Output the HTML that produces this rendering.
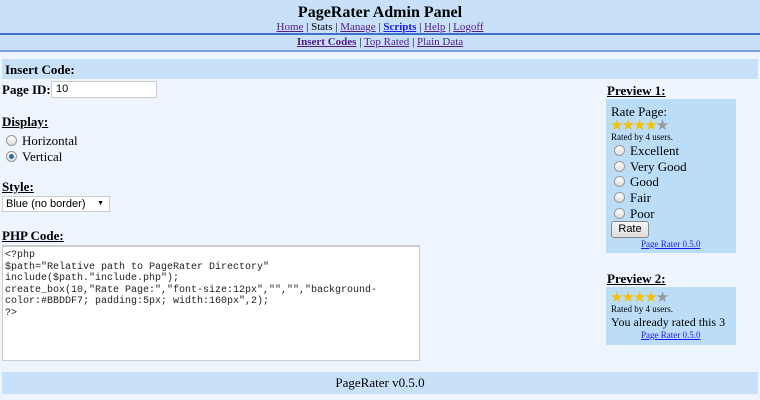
<!DOCTYPE html>
<html><head><style>
body{margin:0;width:760px;height:400px;background:#eef5fe;font-family:"Liberation Serif",serif;color:#000;position:relative;overflow:hidden}
.a{position:absolute}
a{color:#551a8b}
.hdr{left:0;top:0;width:760px;height:33px;background:#c8e1f9;border-bottom:2px solid #3f6fd0;text-align:center}
.sub{left:0;top:35px;width:760px;height:15px;background:#c8e1f9;border-bottom:2px solid #7a9fe8;text-align:center;font-size:11px;line-height:15px}
.bar{background:#c8e1f9}
b.u{text-decoration:underline;font-size:13px}
.radio{display:inline-block;width:9px;height:9px;border:1px solid #999;border-radius:50%;background:linear-gradient(#fff,#ddd);vertical-align:-1px;margin-right:5px}
.radio.on::after{content:"";display:block;width:5px;height:5px;margin:2px;border-radius:50%;background:#2a6cb0}
.box{background:#bbddf7}
.st{color:#f5c000;font-size:15px;letter-spacing:-2px;line-height:14px}
.st i{color:#999;font-style:normal}
pre{margin:0;font-family:"Liberation Mono",monospace;font-size:10px;line-height:11.5px;color:#222}
</style></head><body>
<div class="a hdr"><div style="font-weight:bold;font-size:16px;padding-top:4px;line-height:17px">PageRater Admin Panel</div>
<div style="font-size:11px;line-height:13px"><a href="#">Home</a> | Stats | <a href="#">Manage</a> | <a href="#" style="color:#1a1aee;font-weight:bold">Scripts</a> | <a href="#">Help</a> | <a href="#">Logoff</a></div></div>
<div class="a sub"><a href="#" style="font-weight:bold">Insert Codes</a> | <a href="#">Top Rated</a> | <a href="#">Plain Data</a></div>
<div class="a bar" style="left:2px;top:59px;width:756px;height:20px"><b style="font-size:13px;position:absolute;left:3px;top:3px">Insert Code:</b></div>
<b class="a" style="left:2px;top:82px;font-size:13px">Page ID:</b>
<div class="a" style="left:51px;top:81px;width:104px;height:15px;background:#fff;border:1px solid #ccc;font-family:'Liberation Sans',sans-serif;font-size:11px;line-height:15px;text-indent:4px">10</div>
<b class="a u" style="left:2px;top:114px">Display:</b>
<div class="a" style="left:6px;top:133px;font-size:13px"><span class="radio"></span>Horizontal</div>
<div class="a" style="left:6px;top:149px;font-size:13px"><span class="radio on"></span>Vertical</div>
<b class="a u" style="left:2px;top:179px">Style:</b>
<div class="a" style="left:2px;top:196px;width:106px;height:14px;background:#fff;border:1px solid #ccc;font-family:'Liberation Sans',sans-serif;font-size:11px;line-height:14px;text-indent:3px">Blue (no border)<span style="position:absolute;right:5px;font-size:7px">▼</span></div>
<b class="a u" style="left:2px;top:228px">PHP Code:</b>
<div class="a" style="left:2px;top:245px;width:412px;height:107px;background:#fff;border:1px solid #ccc;border-top:2px solid #ccc;padding:3px 2px"><pre>&lt;?php
$path="Relative path to PageRater Directory"
include($path."include.php");
create_box(10,"Rate Page:","font-size:12px","","","background-
color:#BBDDF7; padding:5px; width:160px",2);
?&gt;</pre></div>
<div class="a bar" style="left:2px;top:372px;width:756px;height:22px;text-align:center;font-size:13px;line-height:22px">PageRater v0.5.0</div>

<b class="a u" style="left:607px;top:83px">Preview 1:</b>
<div class="a box" style="left:606px;top:99px;width:130px;height:154px">
<div class="a" style="left:5px;top:5px;font-size:13px">Rate Page:</div>
<div class="a st" style="left:4px;top:20px">★★★★<i>★</i></div>
<div class="a" style="left:5px;top:33px;font-size:9px">Rated by 4 users.</div>
<div class="a" style="left:8px;top:44px;font-size:13px;line-height:15.7px"><span class="radio"></span>Excellent<br><span class="radio"></span>Very Good<br><span class="radio"></span>Good<br><span class="radio"></span>Fair<br><span class="radio"></span>Poor</div>
<div class="a" style="left:5px;top:122px;width:36px;height:15px;border:1px solid #888;border-radius:3px;background:linear-gradient(#f6f6f6,#ddd);font-family:'Liberation Sans',sans-serif;font-size:11px;text-align:center;line-height:15px">Rate</div>
<a class="a" href="#" style="left:35px;top:140px;font-size:9px;color:#1a1aee">Page Rater 0.5.0</a>
</div>
<b class="a u" style="left:607px;top:271px">Preview 2:</b>
<div class="a box" style="left:606px;top:287px;width:130px;height:58px">
<div class="a st" style="left:4px;top:4px">★★★★<i>★</i></div>
<div class="a" style="left:5px;top:17px;font-size:9px">Rated by 4 users.</div>
<div class="a" style="left:5px;top:28px;font-size:12px">You already rated this 3</div>
<a class="a" href="#" style="left:35px;top:43px;font-size:9px;color:#1a1aee">Page Rater 0.5.0</a>
</div>
</body></html>
